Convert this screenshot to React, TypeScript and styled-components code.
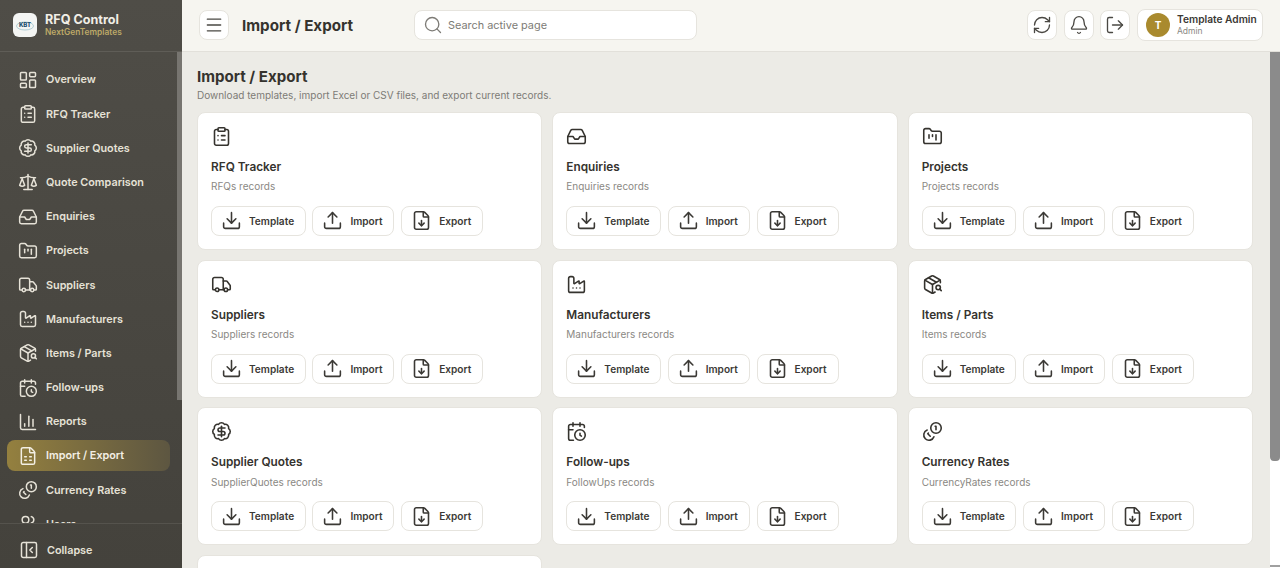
import React from 'react';
import styled, { createGlobalStyle } from 'styled-components';
import {
  LayoutDashboard,
  ClipboardList,
  BadgeDollarSign,
  Scale,
  Inbox,
  FolderKanban,
  Truck,
  Factory,
  PackageSearch,
  CalendarClock,
  ChartColumn,
  FileSpreadsheet,
  Users,
  PanelLeftClose,
  Menu,
  Search,
  RefreshCw,
  Bell,
  LogOut,
  Download,
  Upload,
  FileDown,
} from 'lucide-react';

const GlobalStyle = createGlobalStyle`
  html, body, #root {
    margin: 0;
    height: 100%;
    overflow: hidden;
  }
  body {
    font-family: Inter, "Liberation Sans", sans-serif;
    color: #35332e;
  }
  * {
    box-sizing: border-box;
  }
`;

const Shell = styled.div`
  display: flex;
  width: 1280px;
  height: 568px;
`;

const Sidebar = styled.aside`
  width: 182px;
  flex-shrink: 0;
  display: flex;
  flex-direction: column;
  background: linear-gradient(180deg, #4f4d47 0%, #44423c 100%);
  color: #ece8dd;
`;

const Brand = styled.div`
  height: 52px;
  flex-shrink: 0;
  display: flex;
  align-items: center;
  gap: 8px;
  padding: 0 13px 2px;
  border-bottom: 1px solid #5f5d57;
`;

const LogoBox = styled.div`
  width: 24px;
  height: 24px;
  border-radius: 6px;
  background: #f4f5f3;
  display: flex;
  align-items: center;
  justify-content: center;
`;

const BrandName = styled.div`
  font-size: 12.6px;
  font-weight: 700;
  line-height: 15px;
  color: #f1eee6;
`;

const BrandSub = styled.div`
  font-size: 8.4px;
  font-weight: 600;
  line-height: 11px;
  color: #bda968;
`;

const NavArea = styled.div`
  flex: 1;
  min-height: 0;
  display: flex;
`;

const Nav = styled.nav`
  flex: 1;
  min-width: 0;
  overflow: hidden;
  padding: 12.4px 7px 0;
  display: flex;
  flex-direction: column;
  gap: 3.2px;
`;

const SideTrack = styled.div`
  width: 5px;
  flex-shrink: 0;
`;

const SideThumb = styled.div`
  height: 348px;
  background: #777570;
`;

const NavItem = styled.div<{ $active?: boolean }>`
  height: 31px;
  flex-shrink: 0;
  display: flex;
  align-items: center;
  gap: 8px;
  padding: 0 11px;
  border-radius: 8px;
  font-size: 10.8px;
  font-weight: 600;
  color: ${(props) => (props.$active ? '#f3efe4' : '#e6e2d7')};
  background: ${(props) =>
    props.$active ? 'linear-gradient(90deg, #94803f 0%, #5d5641 100%)' : 'transparent'};
`;

const SideFooter = styled.div`
  height: 45px;
  flex-shrink: 0;
  display: flex;
  align-items: center;
  gap: 8px;
  padding: 8px 19px 0;
  border-top: 1px solid #55534d;
  font-size: 10.8px;
  font-weight: 600;
  color: #e6e2d7;
`;

const Content = styled.div`
  flex: 1;
  min-width: 0;
  display: flex;
  flex-direction: column;
`;

const Topbar = styled.header`
  height: 52px;
  flex-shrink: 0;
  display: flex;
  align-items: center;
  padding: 0 17px 1px 17px;
  background: #f6f5f0;
  border-bottom: 1px solid #e2e0da;
`;

const IconButton = styled.button`
  width: 30px;
  height: 30px;
  padding: 0;
  display: flex;
  align-items: center;
  justify-content: center;
  background: #fff;
  border: 1px solid #e6e4de;
  border-radius: 8px;
  color: #4a4843;
`;

const TopTitle = styled.h1`
  margin: 0 0 0 13px;
  width: 172px;
  font-size: 15.2px;
  font-weight: 700;
  color: #35332e;
`;

const SearchBox = styled.div`
  width: 283px;
  height: 30px;
  display: flex;
  align-items: center;
  gap: 5px;
  padding: 0 8px;
  background: #fff;
  border: 1px solid #e6e4de;
  border-radius: 8px;
  font-size: 10.9px;
  color: #7d7b76;
`;

const TopActions = styled.div`
  margin-left: auto;
  display: flex;
  align-items: center;
  gap: 6.7px;
`;

const UserChip = styled.div`
  width: 126px;
  height: 32px;
  display: flex;
  align-items: center;
  gap: 7px;
  padding: 0 8px;
  background: #fff;
  border: 1px solid #e6e4de;
  border-radius: 8px;
`;

const Avatar = styled.div`
  width: 24px;
  height: 24px;
  flex-shrink: 0;
  border-radius: 50%;
  background: #a98a2e;
  color: #fff;
  font-size: 10px;
  font-weight: 700;
  display: flex;
  align-items: center;
  justify-content: center;
`;

const UserName = styled.div`
  font-size: 10.2px;
  font-weight: 600;
  line-height: 13px;
  color: #3b3935;
  white-space: nowrap;
`;

const UserRole = styled.div`
  font-size: 8.5px;
  line-height: 11px;
  color: #8a8883;
`;

const Body = styled.div`
  flex: 1;
  min-height: 0;
  display: flex;
`;

const Main = styled.main`
  flex: 1;
  min-width: 0;
  overflow: hidden;
  background: #ecebe6;
  padding: 15.4px 17px 17px 15px;
`;

const MainTrack = styled.div`
  width: 10px;
  flex-shrink: 0;
  display: flex;
  flex-direction: column;
  justify-content: space-between;
  background: #fff;
`;

const MainThumb = styled.div`
  height: 409px;
  background: #8b8b8b;
  border-radius: 0 0 4px 4px;
`;

const MainArrow = styled.div`
  height: 2px;
  margin-bottom: 1px;
  background: #a0a0a0;
`;

const PageTitle = styled.h2`
  margin: 0;
  font-size: 15.1px;
  font-weight: 700;
  line-height: 20px;
  color: #35332e;
`;

const PageSub = styled.p`
  margin: 1.6px 0 11px;
  font-size: 10px;
  line-height: 12px;
  color: #7d7b76;
`;

const CardGrid = styled.div`
  display: grid;
  grid-template-columns: repeat(3, 1fr);
  gap: 9.6px 10px;
`;

const Card = styled.section`
  height: 138px;
  padding: 13px 13px;
  background: #fff;
  border: 1px solid #e6e4de;
  border-radius: 8px;
`;

const CardIcon = styled.div`
  height: 21px;
  color: #35332e;
`;

const CardTitle = styled.div`
  margin-top: 12px;
  font-size: 11.8px;
  font-weight: 600;
  line-height: 16px;
  color: #35332e;
`;

const CardSub = styled.div`
  margin-top: 4.4px;
  font-size: 10px;
  line-height: 14px;
  color: #8a8883;
`;

const ActionRow = styled.div`
  margin-top: 12.6px;
  display: flex;
  gap: 6.8px;
`;

const ActionButton = styled.button<{ $wide?: boolean }>`
  width: ${(props) => (props.$wide ? '94.6px' : '82px')};
  height: 30px;
  padding: 0 0 0 9px;
  display: flex;
  align-items: center;
  gap: 7px;
  background: #fff;
  border: 1px solid #e6e4de;
  border-radius: 8px;
  font-family: inherit;
  font-size: 10.1px;
  font-weight: 600;
  color: #3b3935;
`;

type IconProps = { size?: number; strokeWidth?: number };

// same drawing as the coins icon but with the full coin on the right
const CurrencyIcon = ({ size = 20, strokeWidth = 1.8 }: IconProps) => (
  <svg
    width={size}
    height={size}
    viewBox="0 0 24 24"
    fill="none"
    stroke="currentColor"
    strokeWidth={strokeWidth}
    strokeLinecap="round"
    strokeLinejoin="round"
  >
    <circle cx="16" cy="8" r="6" />
    <path d="M5.91 10.37A6 6 0 1 0 13.66 18" />
    <path d="M15 6h1v4" />
    <path d="m7.29 13.88-.7.71 2.82 2.82" />
  </svg>
);

const navItems = [
  { label: 'Overview', icon: LayoutDashboard },
  { label: 'RFQ Tracker', icon: ClipboardList },
  { label: 'Supplier Quotes', icon: BadgeDollarSign },
  { label: 'Quote Comparison', icon: Scale },
  { label: 'Enquiries', icon: Inbox },
  { label: 'Projects', icon: FolderKanban },
  { label: 'Suppliers', icon: Truck },
  { label: 'Manufacturers', icon: Factory },
  { label: 'Items / Parts', icon: PackageSearch },
  { label: 'Follow-ups', icon: CalendarClock },
  { label: 'Reports', icon: ChartColumn },
  { label: 'Import / Export', icon: FileSpreadsheet, active: true },
  { label: 'Currency Rates', icon: CurrencyIcon },
  { label: 'Users', icon: Users },
];

const cards = [
  { title: 'RFQ Tracker', sub: 'RFQs records', icon: ClipboardList },
  { title: 'Enquiries', sub: 'Enquiries records', icon: Inbox },
  { title: 'Projects', sub: 'Projects records', icon: FolderKanban },
  { title: 'Suppliers', sub: 'Suppliers records', icon: Truck },
  { title: 'Manufacturers', sub: 'Manufacturers records', icon: Factory },
  { title: 'Items / Parts', sub: 'Items records', icon: PackageSearch },
  { title: 'Supplier Quotes', sub: 'SupplierQuotes records', icon: BadgeDollarSign },
  { title: 'Follow-ups', sub: 'FollowUps records', icon: CalendarClock },
  { title: 'Currency Rates', sub: 'CurrencyRates records', icon: CurrencyIcon },
  { title: 'Users', sub: 'Users records', icon: Users },
];

const App = () => {
  return (
    <Shell>
      <GlobalStyle />
      <Sidebar>
        <Brand>
          <LogoBox>
            <svg width="20" height="14" viewBox="0 0 20 14">
              <ellipse cx="10" cy="8" rx="8.5" ry="4" fill="none" stroke="#9fc3cc" strokeWidth="0.8" />
              <text
                x="10"
                y="8.5"
                textAnchor="middle"
                fontFamily="Inter, sans-serif"
                fontSize="6"
                fontWeight="800"
                fill="#1d4f6e"
              >
                KBT
              </text>
            </svg>
          </LogoBox>
          <div>
            <BrandName>RFQ Control</BrandName>
            <BrandSub>NextGenTemplates</BrandSub>
          </div>
        </Brand>
        <NavArea>
          <Nav>
            {navItems.map((item) => (
              <NavItem key={item.label} $active={item.active}>
                <item.icon size={20} strokeWidth={1.8} />
                {item.label}
              </NavItem>
            ))}
          </Nav>
          <SideTrack>
            <SideThumb />
          </SideTrack>
        </NavArea>
        <SideFooter>
          <PanelLeftClose size={20} strokeWidth={1.8} />
          Collapse
        </SideFooter>
      </Sidebar>
      <Content>
        <Topbar>
          <IconButton>
            <Menu size={20} strokeWidth={1.6} />
          </IconButton>
          <TopTitle>Import / Export</TopTitle>
          <SearchBox>
            <Search size={20} strokeWidth={1.6} />
            Search active page
          </SearchBox>
          <TopActions>
            <IconButton>
              <RefreshCw size={20} strokeWidth={1.6} />
            </IconButton>
            <IconButton>
              <Bell size={20} strokeWidth={1.6} />
            </IconButton>
            <IconButton>
              <LogOut size={20} strokeWidth={1.6} />
            </IconButton>
            <UserChip>
              <Avatar>T</Avatar>
              <div>
                <UserName>Template Admin</UserName>
                <UserRole>Admin</UserRole>
              </div>
            </UserChip>
          </TopActions>
        </Topbar>
        <Body>
          <Main>
            <PageTitle>Import / Export</PageTitle>
            <PageSub>Download templates, import Excel or CSV files, and export current records.</PageSub>
            <CardGrid>
              {cards.map((card) => (
                <Card key={card.title}>
                  <CardIcon>
                    <card.icon size={21} strokeWidth={1.8} />
                  </CardIcon>
                  <CardTitle>{card.title}</CardTitle>
                  <CardSub>{card.sub}</CardSub>
                  <ActionRow>
                    <ActionButton $wide>
                      <Download size={21} strokeWidth={1.8} />
                      Template
                    </ActionButton>
                    <ActionButton>
                      <Upload size={21} strokeWidth={1.8} />
                      Import
                    </ActionButton>
                    <ActionButton>
                      <FileDown size={21} strokeWidth={1.8} />
                      Export
                    </ActionButton>
                  </ActionRow>
                </Card>
              ))}
            </CardGrid>
          </Main>
          <MainTrack>
            <MainThumb />
            <MainArrow />
          </MainTrack>
        </Body>
      </Content>
    </Shell>
  );
};

export default App;
